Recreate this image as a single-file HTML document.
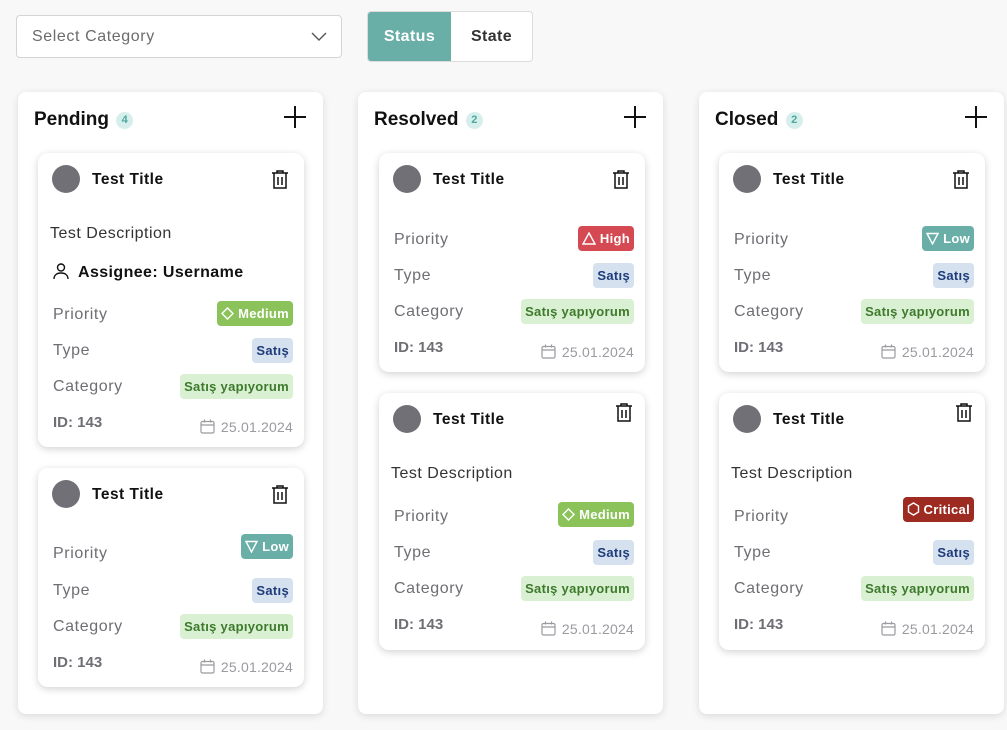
<!DOCTYPE html>
<html><head><meta charset="utf-8"><style>
*{box-sizing:border-box;margin:0;padding:0}
body{width:1007px;height:730px;background:#f8f8f8;font-family:"Liberation Sans",sans-serif;position:relative;overflow:hidden}
.abs{position:absolute}
.sel{left:16px;top:15px;width:326px;height:43px;border:1px solid #d4d4d4;border-radius:4px;background:#fff}
.sel span{position:absolute;left:15px;top:12px;font-size:16px;color:#6b6b6b;letter-spacing:0.6px}
.tg{top:11px;height:51px;border:1px solid #dcdcdc;border-radius:4px;overflow:hidden;left:367px;width:166px;display:flex;background:#fff}
.tg div{flex:1;font-weight:bold;font-size:16px;line-height:49px;text-align:center;color:#333;letter-spacing:0.4px}
.tg .on{background:#6aaea8;color:#fff;flex:0 0 83px}
.col{top:92px;height:622px;width:305px;background:#fff;border-radius:8px;box-shadow:0 2px 8px rgba(0,0,0,.12)}
.ch{position:absolute;left:16px;top:17px;font-size:19px;font-weight:bold;color:#111}
.cnt{display:inline-block;width:17px;height:17px;border-radius:50%;background:#d7efec;color:#4aa8a0;font-size:11px;line-height:17px;text-align:center;vertical-align:2px;margin-left:2px}
.plus{position:absolute;right:16px;top:13px;width:24px;height:24px}
.card{width:266px;background:#fff;border-radius:10px;box-shadow:0 2px 8px rgba(0,0,0,.18)}
.av{position:absolute;left:14px;top:12px;width:28px;height:28px;border-radius:50%;background:#707076}
.tt{position:absolute;left:54px;top:15px;font-size:15.5px;font-weight:bold;color:#111;line-height:24px;letter-spacing:0.5px}
.tr{position:absolute;left:232px;top:16px}
.r{position:absolute;left:15px;right:11px;height:24px;line-height:24px;font-size:16px;color:#6e6e74;letter-spacing:0.6px;margin-top:2px}
.r b{position:absolute;right:0;top:0;height:25px;line-height:25px;border-radius:4px;padding:0 4px;font-size:13px;font-weight:bold;letter-spacing:0.3px}
.desc{position:absolute;left:12px;font-size:16px;color:#333;line-height:24px;letter-spacing:0.5px;margin-top:2px}
.id{font-weight:bold;color:#6e6e74;font-size:15px;letter-spacing:0}
.dt{position:absolute;right:0;top:4px;color:#9a9aa0;font-size:14px;line-height:24px;letter-spacing:0.2px}
.ty{background:#d5e1ef;color:#1f3c7a}
.ca{background:#d9f0d3;color:#3e7a2c}
.me{background:#8bc35a;color:#fff}
.hi{background:#d54a52;color:#fff}
.lo{background:#6aaea8;color:#fff}
.cr{background:#9e2b22;color:#fff}
.r b svg{vertical-align:-2px;margin-right:4px}
.asg{left:14px;top:108px;font-size:16px;font-weight:bold;color:#111;line-height:24px;letter-spacing:0.4px}
</style></head><body>
<div class="abs sel"><span>Select Category</span><svg class="abs" style="left:294px;top:14px" width="16" height="12" viewBox="0 0 16 12"><path d="M1 3l7 7 7-7" fill="none" stroke="#555" stroke-width="1.4"/></svg></div>
<div class="abs tg"><div class="on">Status</div><div>State</div></div>

<div class="abs col" style="left:18px"><div class="ch">Pending <span class="cnt">4</span></div><svg class="plus" viewBox="0 0 24 24"><path d="M12 1v22M1 12h22" stroke="#111" stroke-width="2"/></svg></div>
<div class="abs col" style="left:358px"><div class="ch">Resolved <span class="cnt">2</span></div><svg class="plus" viewBox="0 0 24 24"><path d="M12 1v22M1 12h22" stroke="#111" stroke-width="2"/></svg></div>
<div class="abs col" style="left:699px"><div class="ch">Closed <span class="cnt">2</span></div><svg class="plus" viewBox="0 0 24 24"><path d="M12 1v22M1 12h22" stroke="#111" stroke-width="2"/></svg></div>

<div class="abs card" style="left:38px;top:153px;height:294px">
<div class="av"></div><div class="tt">Test Title</div>
<svg class="tr" width="20" height="20" viewBox="0 0 20 20"><path d="M2 4h16M7 4V2h6v2M4 4v15h12V4M8 8v8M12 8v8" fill="none" stroke="#111" stroke-width="1.5"/></svg>
<div class="desc" style="top:67px">Test Description</div>
<div class="abs asg"><svg width="18" height="18" viewBox="0 0 18 18" style="vertical-align:-3px;margin-right:8px"><circle cx="9" cy="5.5" r="3.5" fill="none" stroke="#111" stroke-width="1.4"/><path d="M2 17c0-4 3-6 7-6s7 2 7 6" fill="none" stroke="#111" stroke-width="1.4"/></svg>Assignee: Username</div>
<div class="r" style="top:148px">Priority<b class="me" style="top:-2px"><svg width="13" height="13" viewBox="0 0 13 13"><path d="M6.5 1l5.5 5.5-5.5 5.5L1 6.5z" fill="none" stroke="#fff" stroke-width="1.4"/></svg>Medium</b></div>
<div class="r" style="top:184px">Type<b class="ty" style="top:-1px">Satış</b></div>
<div class="r" style="top:220px">Category<b class="ca" style="top:-1px">Satış yapıyorum</b></div>
<div class="r" style="top:256px"><span class="id">ID: 143</span><span class="dt"><svg width="15" height="15" viewBox="0 0 15 15" style="vertical-align:-2px;margin-right:6px"><rect x="1" y="2.5" width="13" height="11.5" rx="1.5" fill="none" stroke="#9a9aa0" stroke-width="1.2"/><path d="M1 6h13M4.5 0.5v3M10.5 0.5v3" stroke="#9a9aa0" stroke-width="1.2"/></svg>25.01.2024</span></div>
</div>

<div class="abs card" style="left:38px;top:468px;height:219px">
<div class="av"></div><div class="tt">Test Title</div>
<svg class="tr" width="20" height="20" viewBox="0 0 20 20"><path d="M2 4h16M7 4V2h6v2M4 4v15h12V4M8 8v8M12 8v8" fill="none" stroke="#111" stroke-width="1.5"/></svg>
<div class="r" style="top:72px">Priority<b class="lo" style="top:-8px"><svg width="13" height="13" viewBox="0 0 13 13"><path d="M1 1.5h11L6.5 12z" fill="none" stroke="#fff" stroke-width="1.4"/></svg>Low</b></div>
<div class="r" style="top:109px">Type<b class="ty" style="top:-1px">Satış</b></div>
<div class="r" style="top:145px">Category<b class="ca" style="top:-1px">Satış yapıyorum</b></div>
<div class="r" style="top:181px"><span class="id">ID: 143</span><span class="dt"><svg width="15" height="15" viewBox="0 0 15 15" style="vertical-align:-2px;margin-right:6px"><rect x="1" y="2.5" width="13" height="11.5" rx="1.5" fill="none" stroke="#9a9aa0" stroke-width="1.2"/><path d="M1 6h13M4.5 0.5v3M10.5 0.5v3" stroke="#9a9aa0" stroke-width="1.2"/></svg>25.01.2024</span></div>
</div>

<div class="abs card" style="left:379px;top:153px;height:219px">
<div class="av"></div><div class="tt">Test Title</div>
<svg class="tr" width="20" height="20" viewBox="0 0 20 20"><path d="M2 4h16M7 4V2h6v2M4 4v15h12V4M8 8v8M12 8v8" fill="none" stroke="#111" stroke-width="1.5"/></svg>
<div class="r" style="top:73px">Priority<b class="hi" style="top:-2px"><svg width="14" height="13" viewBox="0 0 14 13"><path d="M7 1l6 11H1z" fill="none" stroke="#fff" stroke-width="1.4"/></svg>High</b></div>
<div class="r" style="top:109px">Type<b class="ty" style="top:-1px">Satış</b></div>
<div class="r" style="top:145px">Category<b class="ca" style="top:-1px">Satış yapıyorum</b></div>
<div class="r" style="top:181px"><span class="id">ID: 143</span><span class="dt"><svg width="15" height="15" viewBox="0 0 15 15" style="vertical-align:-2px;margin-right:6px"><rect x="1" y="2.5" width="13" height="11.5" rx="1.5" fill="none" stroke="#9a9aa0" stroke-width="1.2"/><path d="M1 6h13M4.5 0.5v3M10.5 0.5v3" stroke="#9a9aa0" stroke-width="1.2"/></svg>25.01.2024</span></div>
</div>
<div class="abs card" style="left:719px;top:153px;height:219px">
<div class="av"></div><div class="tt">Test Title</div>
<svg class="tr" width="20" height="20" viewBox="0 0 20 20"><path d="M2 4h16M7 4V2h6v2M4 4v15h12V4M8 8v8M12 8v8" fill="none" stroke="#111" stroke-width="1.5"/></svg>
<div class="r" style="top:73px">Priority<b class="lo" style="top:-2px"><svg width="13" height="13" viewBox="0 0 13 13"><path d="M1 1.5h11L6.5 12z" fill="none" stroke="#fff" stroke-width="1.4"/></svg>Low</b></div>
<div class="r" style="top:109px">Type<b class="ty" style="top:-1px">Satış</b></div>
<div class="r" style="top:145px">Category<b class="ca" style="top:-1px">Satış yapıyorum</b></div>
<div class="r" style="top:181px"><span class="id">ID: 143</span><span class="dt"><svg width="15" height="15" viewBox="0 0 15 15" style="vertical-align:-2px;margin-right:6px"><rect x="1" y="2.5" width="13" height="11.5" rx="1.5" fill="none" stroke="#9a9aa0" stroke-width="1.2"/><path d="M1 6h13M4.5 0.5v3M10.5 0.5v3" stroke="#9a9aa0" stroke-width="1.2"/></svg>25.01.2024</span></div>
</div>

<div class="abs card" style="left:379px;top:393px;height:257px">
<div class="av" style="top:12px"></div><div class="tt">Test Title</div>
<svg class="tr" style="top:9px;left:235px" width="20" height="20" viewBox="0 0 20 20"><path d="M2 4h16M7 4V2h6v2M4 4v15h12V4M8 8v8M12 8v8" fill="none" stroke="#111" stroke-width="1.5"/></svg>
<div class="desc" style="top:67px">Test Description</div>
<div class="r" style="top:110px">Priority<b class="me" style="top:-3px"><svg width="13" height="13" viewBox="0 0 13 13"><path d="M6.5 1l5.5 5.5-5.5 5.5L1 6.5z" fill="none" stroke="#fff" stroke-width="1.4"/></svg>Medium</b></div>
<div class="r" style="top:146px">Type<b class="ty" style="top:-1px">Satış</b></div>
<div class="r" style="top:182px">Category<b class="ca" style="top:-1px">Satış yapıyorum</b></div>
<div class="r" style="top:218px"><span class="id">ID: 143</span><span class="dt"><svg width="15" height="15" viewBox="0 0 15 15" style="vertical-align:-2px;margin-right:6px"><rect x="1" y="2.5" width="13" height="11.5" rx="1.5" fill="none" stroke="#9a9aa0" stroke-width="1.2"/><path d="M1 6h13M4.5 0.5v3M10.5 0.5v3" stroke="#9a9aa0" stroke-width="1.2"/></svg>25.01.2024</span></div>
</div>
<div class="abs card" style="left:719px;top:393px;height:257px">
<div class="av" style="top:12px"></div><div class="tt">Test Title</div>
<svg class="tr" style="top:9px;left:235px" width="20" height="20" viewBox="0 0 20 20"><path d="M2 4h16M7 4V2h6v2M4 4v15h12V4M8 8v8M12 8v8" fill="none" stroke="#111" stroke-width="1.5"/></svg>
<div class="desc" style="top:67px">Test Description</div>
<div class="r" style="top:110px">Priority<b class="cr" style="top:-8px"><svg width="13" height="14" viewBox="0 0 13 14"><path d="M6.5 1l5 3v6l-5 3-5-3V4z" fill="none" stroke="#fff" stroke-width="1.4"/></svg>Critical</b></div>
<div class="r" style="top:146px">Type<b class="ty" style="top:-1px">Satış</b></div>
<div class="r" style="top:182px">Category<b class="ca" style="top:-1px">Satış yapıyorum</b></div>
<div class="r" style="top:218px"><span class="id">ID: 143</span><span class="dt"><svg width="15" height="15" viewBox="0 0 15 15" style="vertical-align:-2px;margin-right:6px"><rect x="1" y="2.5" width="13" height="11.5" rx="1.5" fill="none" stroke="#9a9aa0" stroke-width="1.2"/><path d="M1 6h13M4.5 0.5v3M10.5 0.5v3" stroke="#9a9aa0" stroke-width="1.2"/></svg>25.01.2024</span></div>
</div>
</body></html>
